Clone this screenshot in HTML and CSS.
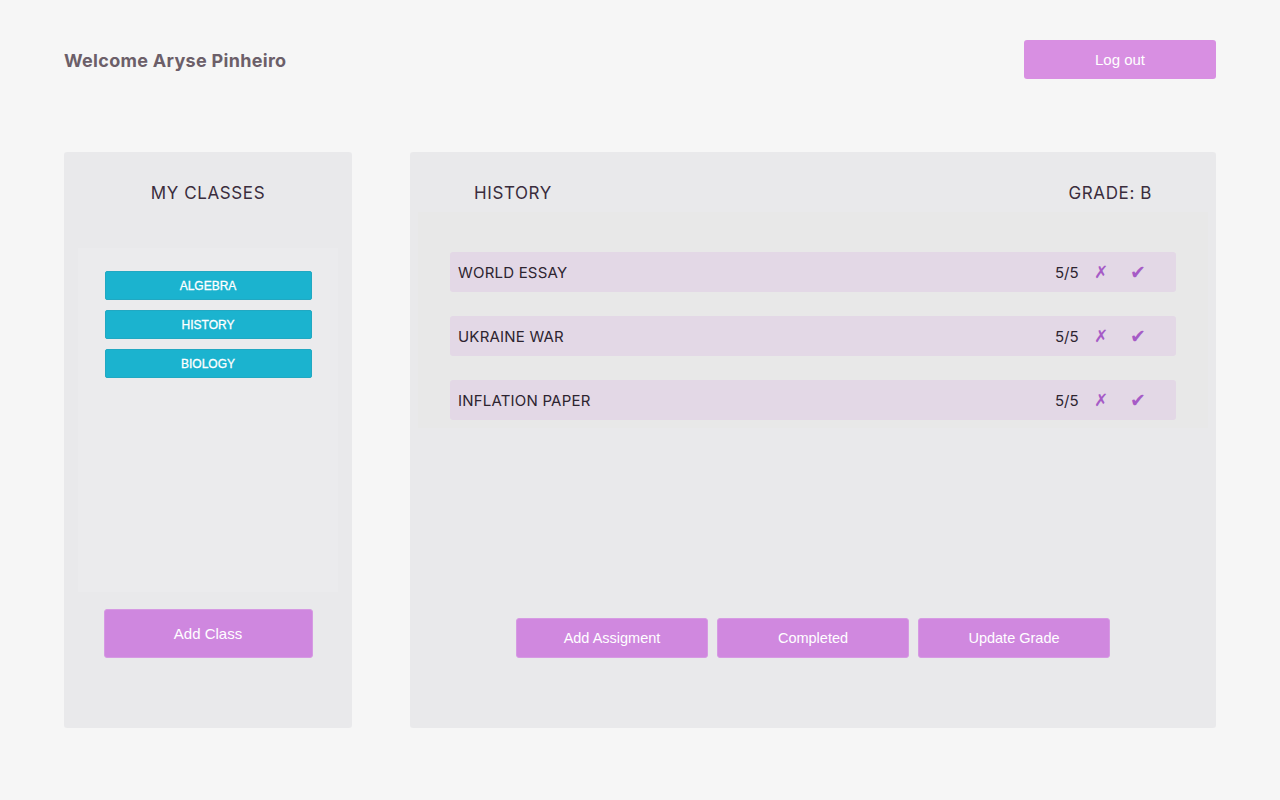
FILE: index.html
```html
<!DOCTYPE html>
<html>
<head>
<meta charset="utf-8">
<link rel="stylesheet" href="styles.css">
</head>
<body>
<div class="page">
  <header class="top">
    <h1 class="welcome">Welcome Aryse Pinheiro</h1>
    <button class="btn logout">Log out</button>
  </header>
  <main class="main">
    <section class="classes">
      <h2 class="title">MY CLASSES</h2>
      <div class="class-box">
        <button class="class-btn">ALGEBRA</button>
        <button class="class-btn">HISTORY</button>
        <button class="class-btn">BIOLOGY</button>
      </div>
      <button class="btn add-class">Add Class</button>
    </section>
    <section class="detail">
      <div class="detail-head">
        <h2 class="title">HISTORY</h2>
        <h2 class="title">GRADE: B</h2>
      </div>
      <div class="list">
        <div class="row"><span class="name">WORLD ESSAY</span><span class="score">5/5</span><span class="x">✗</span><span class="ok">✔</span></div>
        <div class="row"><span class="name">UKRAINE WAR</span><span class="score">5/5</span><span class="x">✗</span><span class="ok">✔</span></div>
        <div class="row"><span class="name">INFLATION PAPER</span><span class="score">5/5</span><span class="x">✗</span><span class="ok">✔</span></div>
      </div>
      <div class="actions">
        <button class="btn act">Add Assigment</button>
        <button class="btn act">Completed</button>
        <button class="btn act">Update Grade</button>
      </div>
    </section>
  </main>
</div>
</body>
</html>
```
FILE: styles.css
```css
* { box-sizing: border-box; }
html, body { margin: 0; padding: 0; }
body {
  background: #f6f6f6;
  font-family: Inter, "Liberation Sans", sans-serif;
  width: 1280px;
  height: 800px;
  overflow: hidden;
}
.page { padding: 40px 64px 0 64px; }
.top {
  display: flex;
  justify-content: space-between;
  align-items: flex-start;
  height: 112px;
}
.welcome {
  margin: 10px 0 0 0;
  font-size: 18px;
  font-weight: 700;
  color: #6c5f69;
  letter-spacing: 0.3px;
}
.btn {
  border: none;
  color: #fff;
  font-family: "Liberation Sans", Arial, sans-serif;
  font-size: 15px;
  border-radius: 3px;
  cursor: pointer;
}
.logout {
  width: 192px;
  height: 39px;
  background: #d88fe2;
  font-weight: 500;
}
.main {
  display: flex;
  gap: 58px;
}
.classes {
  width: 288px;
  height: 576px;
  background: #e9e9eb;
  border-radius: 3px;
  display: flex;
  flex-direction: column;
  align-items: center;
  padding-top: 30px;
}
.title {
  margin: 0;
  font-size: 17px;
  font-weight: 400;
  letter-spacing: 0.6px;
  color: #3a2d3d;
  line-height: 22px;
}
.class-box {
  margin-top: 44px;
  width: 260px;
  height: 344px;
  background: #ebebed;
  display: flex;
  flex-direction: column;
  align-items: center;
  padding-top: 23px;
  gap: 10px;
}
.class-btn {
  width: 207px;
  height: 29px;
  background: #1bb3cf;
  border: 1px solid #21a8c2;
  border-radius: 2px;
  color: #fff;
  font-family: "Liberation Sans", Arial, sans-serif;
  font-size: 12px;
  font-weight: 400;
  -webkit-text-stroke: 0.3px #fff;
}
.add-class {
  margin-top: 17px;
  width: 209px;
  height: 49px;
  background: #cf87df;
  border: 1px solid #d69ae3;
}
.detail {
  width: 806px;
  height: 576px;
  background: #e9e9eb;
  border-radius: 3px;
  display: flex;
  flex-direction: column;
}
.detail-head {
  display: flex;
  justify-content: space-between;
  height: 60px;
  padding: 30px 64px 0 64px;
}
.list {
  margin: 0 8px;
  height: 216px;
  background: #e8e8e8;
  padding: 40px 32px 0 32px;
  display: flex;
  flex-direction: column;
  gap: 24px;
}
.row {
  height: 40px;
  background: #e3d8e6;
  border-radius: 3px;
  display: flex;
  align-items: center;
  padding: 0 22px 0 8px;
  font-size: 15px;
  color: #2d2430;
  letter-spacing: 0.2px;
}
.name { flex: 1; }
.score { width: 24px; letter-spacing: 0; }
.x {
  font-family: "DejaVu Sans", sans-serif;
  color: #a65bc6;
  font-size: 17px;
  margin-left: 15px;
  width: 28px;
}
.ok {
  font-family: "DejaVu Sans", sans-serif;
  color: #a65bc6;
  font-size: 19px;
  margin-left: 8px;
  width: 24px;
}
.actions {
  margin-top: 190px;
  display: flex;
  justify-content: center;
  gap: 9px;
}
.act {
  width: 192px;
  height: 40px;
  background: #d088df;
  border: 1px solid #d69ae3;
  font-size: 14.5px;
}
```
